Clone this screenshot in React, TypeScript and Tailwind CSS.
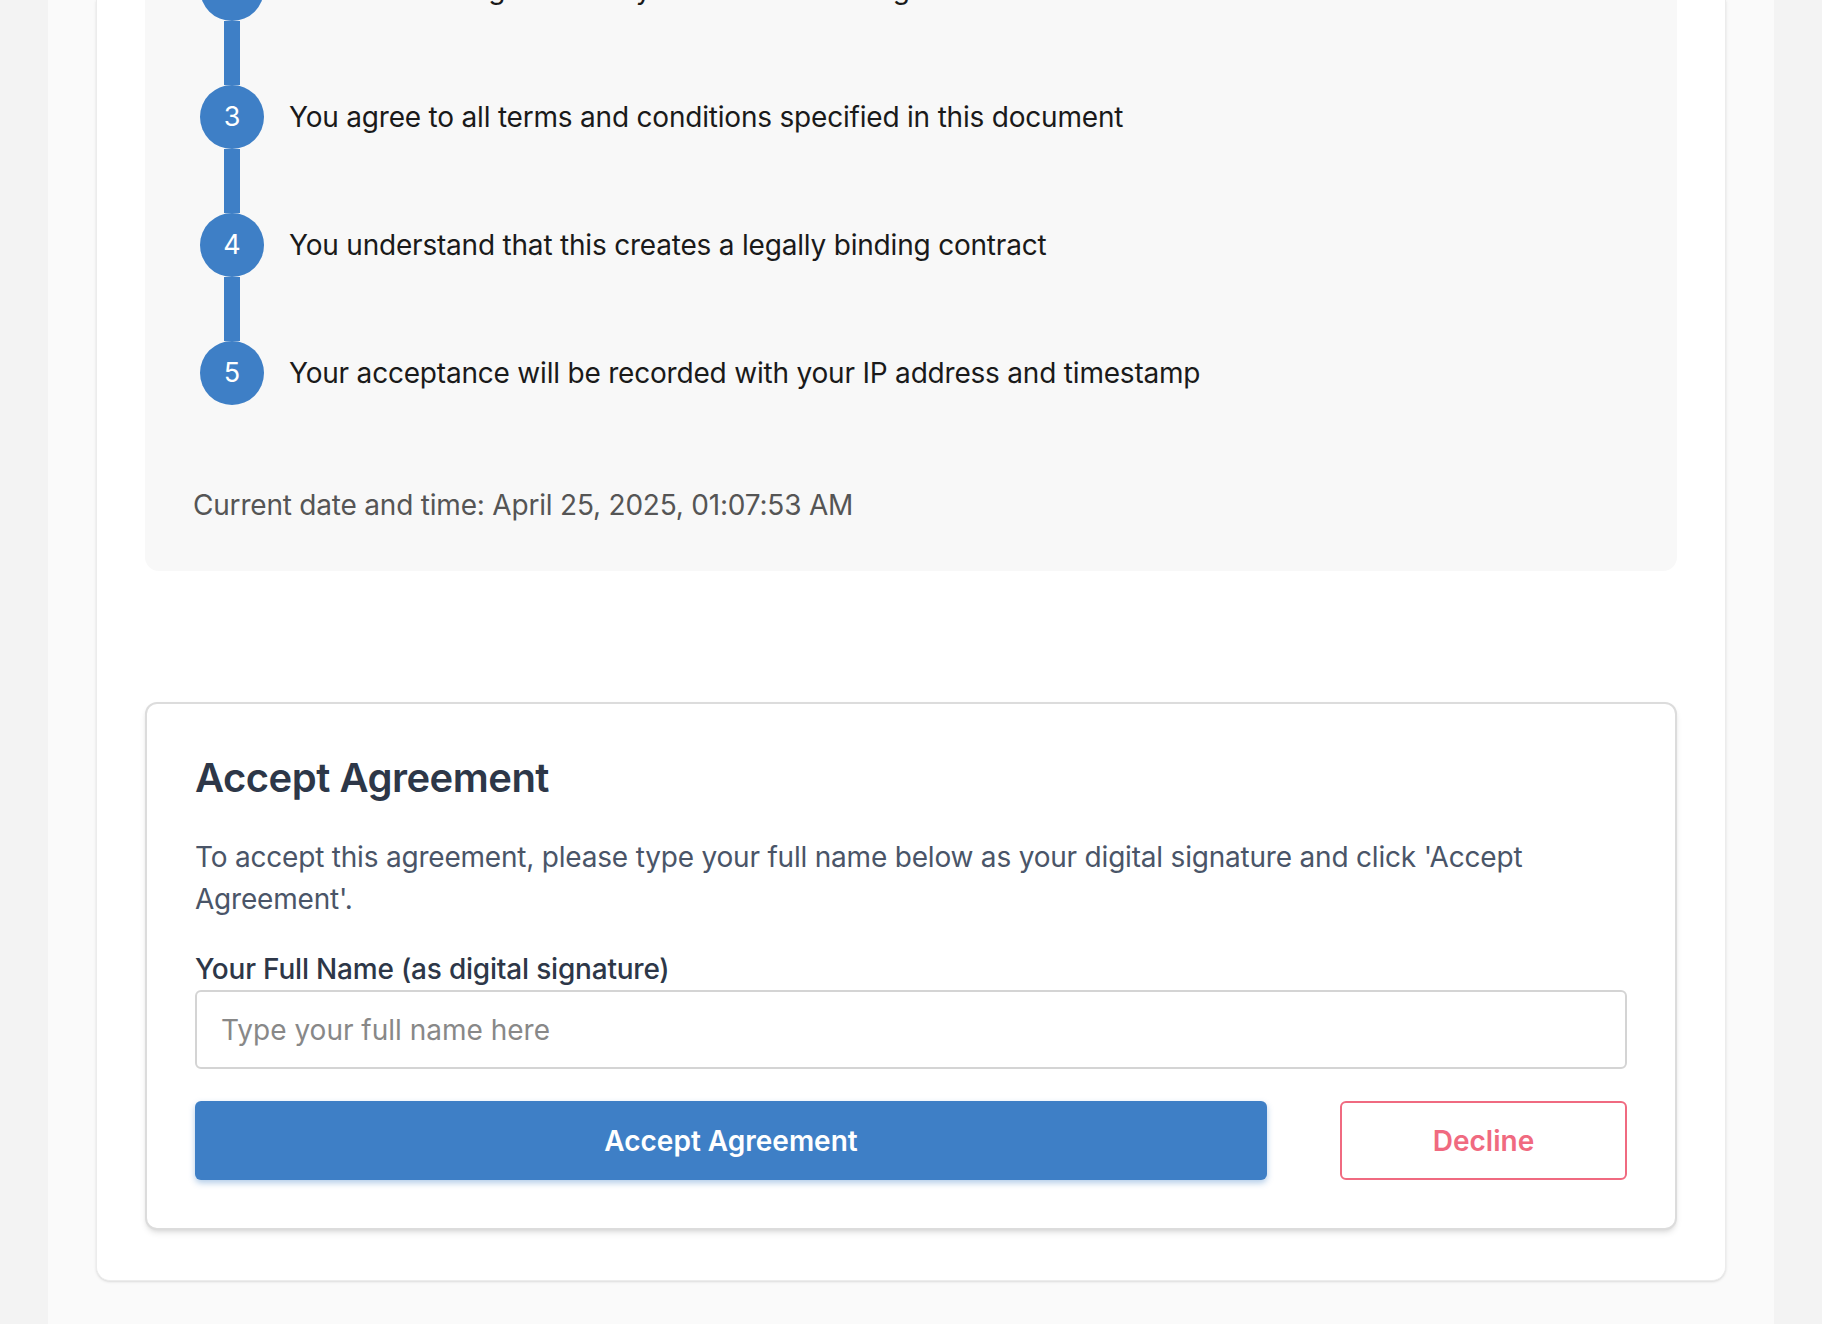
export default function App() {
  const steps = [
    [2, "You have the legal authority to enter into this agreement"],
    [3, "You agree to all terms and conditions specified in this document"],
    [4, "You understand that this creates a legally binding contract"],
    [5, "Your acceptance will be recorded with your IP address and timestamp"],
  ] as const;
  return (
    <div className="h-[1324px] overflow-hidden bg-[#f3f3f3]" style={{ fontFamily: "Inter, 'Noto Sans', sans-serif" }}>
      <div className="mx-[48px] flex h-full flex-col bg-[#fafafa] px-[48px]">
        <div className="rounded-b-[14px] border border-t-0 border-[#ececec] bg-white px-[48px] pb-[50px] shadow-sm">
          <div className="flex flex-col rounded-b-[14px] bg-[#f8f8f8] pl-[48px] pb-[50px]">
            <div className="-mt-[43px] ml-[7px] flex flex-col">
              {steps.map(([n, t], i) => (
                <div key={n} className="flex">
                  <div className="flex w-[64px] flex-col items-center">
                    <div className="flex h-[64px] w-[64px] items-center justify-center rounded-full bg-[#3e7fc6] text-[27px] text-white">{n}</div>
                    {i < steps.length - 1 && <div className="h-[64px] w-[16px] bg-[#3e7fc6]" />}
                  </div>
                  <div className="ml-[25px] flex h-[64px] items-center text-[28px] tracking-[-0.2px] text-[#1a1a1a]">{t}</div>
                </div>
              ))}
            </div>
            <div className="mt-[84px] text-[28px] leading-[32px] tracking-[-0.2px] text-[#555]">Current date and time: April 25, 2025, 01:07:53 AM</div>
          </div>
          <div className="mt-[131px] rounded-[12px] border-2 border-[#dcdcdc] bg-white px-[48px] pt-[50px] pb-[48px] shadow-md">
            <h2 className="text-[40px] font-semibold leading-[48px] tracking-[-0.5px] text-[#2d3748]">Accept Agreement</h2>
            <p className="mt-[34px] text-[28px] leading-[42px] tracking-[-0.2px] text-[#4a5568]">To accept this agreement, please type your full name below as your digital signature and click 'Accept Agreement'.</p>
            <div className="mt-[32px] text-[28px] font-medium leading-[34px] tracking-[-0.2px] text-[#2d3748]">Your Full Name (as digital signature)</div>
            <input placeholder="Type your full name here" className="mt-[4px] h-[79px] w-full rounded-[6px] border-2 border-[#d4d4d4] px-[24px] text-[28px] placeholder:text-[#888] outline-none" />
            <div className="mt-[32px] flex gap-[73px]">
              <button className="h-[79px] flex-1 rounded-[6px] bg-[#3e7fc6] text-[28px] font-semibold text-white shadow-[0_3px_6px_rgba(62,127,198,0.4)]">Accept Agreement</button>
              <button className="h-[79px] w-[287px] rounded-[6px] border-2 border-[#f06a80] bg-white text-[28px] font-semibold text-[#f06a80]">Decline</button>
            </div>
          </div>
        </div>
      </div>
    </div>
  );
}
